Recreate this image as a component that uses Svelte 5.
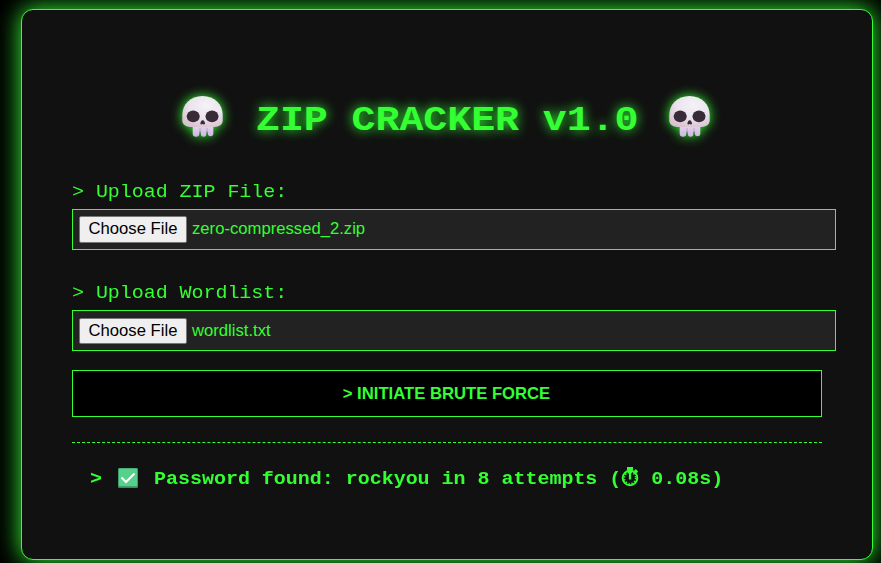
<script>
  const fields = [
    { label: '> Upload ZIP File:', file: 'zero-compressed_2.zip' },
    { label: '> Upload Wordlist:', file: 'wordlist.txt' }
  ];
</script>

{#snippet skull(id)}
  <svg class="skull" viewBox="0 0 42 42" aria-hidden="true">
    <defs>
      <radialGradient id="{id}-bone" cx=".6" cy=".3" r=".75">
        <stop offset="0" stop-color="#f5f2f7" />
        <stop offset=".55" stop-color="#ebe4ee" />
        <stop offset="1" stop-color="#d9c2cf" />
      </radialGradient>
      <linearGradient id="{id}-teeth" x1="0" y1="0" x2="0" y2="1">
        <stop offset="0" stop-color="#e7dcec" />
        <stop offset="1" stop-color="#d0b4e4" />
      </linearGradient>
    </defs>
    <path fill="url(#{id}-teeth)" d="M10.700 27h20.600v10.500a2.700 2.700 0 0 1-5.400 0V36a.8.8 0 0 0-1.600 0v2a2.700 2.700 0 0 1-5.400 0v-2a.8.8 0 0 0-1.600 0v1.500a3 3 0 0 1-6.600 0z" />
    <path fill="url(#{id}-bone)" d="M20.500 0C8.500 0 .3 8.500.3 19v5.500C.3 29 4.500 30.500 8.500 31h24c4-.5 8.200-2 8.200-6.500V19C40.700 8.500 32.500 0 20.500 0z" />
    <ellipse cx="11.200" cy="20.300" rx="6.500" ry="5.900" fill="#382b38" />
    <ellipse cx="30" cy="20.300" rx="6.500" ry="5.900" fill="#382b38" />
    <path fill="#382b38" d="M20.700 24.200c1.300 0 2.500 2.200 2.300 3.500-.2 1-1.500.8-2.300.3-.8.5-2.100.7-2.300-.3-.2-1.300 1-3.500 2.300-3.500z" />
    <path d="M18 32v5M25 32v5" stroke="#b89ac4" stroke-width=".8" />
  </svg>
{/snippet}

<main>
  <section class="card">
    <h1>{@render skull('left')}<span>ZIP CRACKER v1.0</span>{@render skull('right')}</h1>
    {#each fields as field}
      <div class="field">
        <div class="label">{field.label}</div>
        <div class="picker"><button class="choose">Choose File</button><span>{field.file}</span></div>
      </div>
    {/each}
    <button class="start">&gt; INITIATE BRUTE FORCE</button>
    <div class="result">
      <span>&gt;</span>
      <svg class="check" viewBox="0 0 20 20" aria-hidden="true">
        <rect width="20" height="20" rx="1.200" fill="#388e64" />
        <rect x=".8" y=".5" width="18.400" height="17.800" rx="1" fill="#56d18c" />
        <path d="M3.500 9.500 8 14l8.500-8.500" fill="none" stroke="#fff" stroke-width="2" />
      </svg>
      <span class="found">Password found: rockyou in 8 attempts (</span>
      <svg class="watch" viewBox="0 0 18 20" aria-hidden="true">
        <g fill="none" stroke="#33ff33">
          <circle cx="9" cy="11" r="7.300" stroke-width="2" />
          <path d="M6 1.500h6M9 1v4" stroke-width="2.800" />
          <path d="m13.800 3 2.400 2.400" stroke-width="2.800" />
          <path d="M9 5v7.500" stroke-width="2.200" />
          <circle cx="9" cy="11" r="5.700" stroke-width="1.600" stroke-dasharray="1.300 1.685" />
        </g>
      </svg>
      <span class="time">0.08s)</span>
    </div>
  </section>
</main>

<style>
  :global(body) { background: #000; overflow: hidden; }
  main {
    box-sizing: border-box;
    height: 563px;
    padding: 9px 8px 0 21px;
    overflow: hidden;
    color: #33ff33;
    font-family: "Courier New", "Liberation Mono", monospace;
  }
  .card {
    box-sizing: border-box;
    height: 551px;
    padding: 79px 50px 0;
    background: #111;
    border: 1px solid #33ff33;
    border-radius: 12px;
    box-shadow: 0 0 25px #33ff33;
  }
  h1 {
    display: flex;
    align-items: center;
    height: 58px;
    margin: 0 0 31px;
    padding-left: 110px;
    font-size: 40px;
    line-height: 58px;
    white-space: pre;
    text-shadow: 0 0 12.500px #33ff33;
  }
  h1 span {
    width: 384px;
    margin: 0 29px 0 32px;
    letter-spacing: -0.1px;
    transform: translateY(2px) scaleY(.88);
    transform-origin: 50% 41px;
  }
  .skull { width: 42px; height: 42px; flex: none; margin-top: -3px; filter: drop-shadow(0 0 6px #33ff33); }
  .field { height: 101px; }
  .label {
    height: 31px;
    font-size: 20px;
    line-height: 28px;
    letter-spacing: -0.05px;
    white-space: pre;
    transform: scaleY(.93);
    transform-origin: 0 20px;
  }
  .picker {
    box-sizing: border-box;
    display: flex;
    align-items: center;
    width: 764px;
    height: 41px;
    padding: 0 6px;
    border: 1px solid #33ff33;
    background: #222;
    font: 16.667px/20px "Liberation Sans", Arial, sans-serif;
  }
  .picker span { margin-left: 5px; padding-bottom: 2px; white-space: pre; }
  .choose {
    box-sizing: border-box;
    width: 108px;
    height: 27px;
    padding: 0 0 2px;
    border: 1px solid #767676;
    border-radius: 2px;
    background: #efefef;
    color: #000;
    font: inherit;
  }
  .field + .field .picker span { padding-bottom: 0; }
  .field + .field .choose { height: 26px; padding-bottom: 0; }
  .start {
    box-sizing: border-box;
    display: block;
    width: 750px;
    height: 47px;
    margin: -10px 0 25px;
    padding: 1px 1px 0 0;
    border: 1px solid #33ff33;
    background: #000;
    color: #33ff33;
    font: bold 16.667px "Liberation Sans", Arial, sans-serif;
  }
  .result {
    display: flex;
    align-items: center;
    height: 70px;
    padding-left: 18px;
    border-top: 1px dashed #33ff33;
    font-size: 20px;
    font-weight: bold;
    white-space: pre;
  }
  .result span { transform: scaleY(.92); transform-origin: 0 80%; }
  .check { width: 20px; height: 20px; flex: none; margin: 0 16px 1px; }
  .watch { width: 18px; height: 20px; flex: none; margin: 0 12px 3px 0; }
  .found { letter-spacing: -0.02px; }
</style>
